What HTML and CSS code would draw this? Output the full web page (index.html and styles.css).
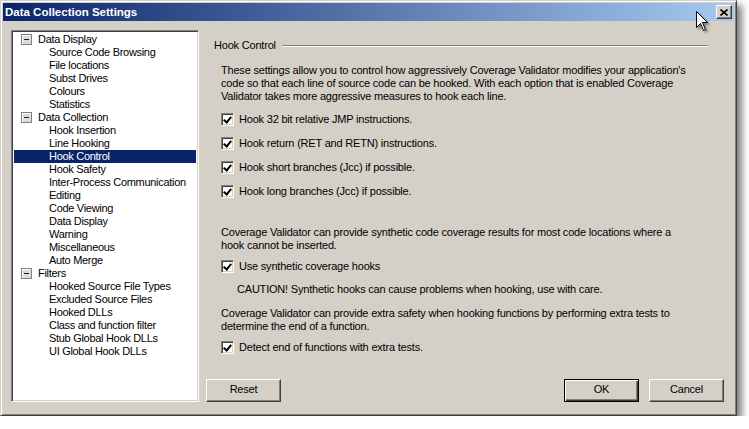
FILE: index.html
```html
<!DOCTYPE html>
<html lang="en">

<head>
    <meta charset="UTF-8">
    <title>Data Collection Settings</title>
    <link rel="stylesheet" href="styles.css">
</head>

<body>

    <div class="window">
        <div class="titlebar">
            <span class="title">Data Collection Settings</span>
            <span class="close-btn">
                <svg width="8" height="7" viewBox="0 0 8 7"><path d="M0.5 0.5 L7.5 6.5 M7.5 0.5 L0.5 6.5" stroke="#000" stroke-width="1.6"/></svg>
            </span>
        </div>

        <div class="dialog-body">
            <ul class="tree">
                <li class="node"><span class="expander"></span>Data Display</li>
                <li class="leaf">Source Code Browsing</li>
                <li class="leaf">File locations</li>
                <li class="leaf">Subst Drives</li>
                <li class="leaf">Colours</li>
                <li class="leaf">Statistics</li>
                <li class="node"><span class="expander"></span>Data Collection</li>
                <li class="leaf">Hook Insertion</li>
                <li class="leaf">Line Hooking</li>
                <li class="leaf selected">Hook Control</li>
                <li class="leaf">Hook Safety</li>
                <li class="leaf">Inter-Process Communication</li>
                <li class="leaf">Editing</li>
                <li class="leaf">Code Viewing</li>
                <li class="leaf">Data Display</li>
                <li class="leaf">Warning</li>
                <li class="leaf">Miscellaneous</li>
                <li class="leaf">Auto Merge</li>
                <li class="node"><span class="expander"></span>Filters</li>
                <li class="leaf">Hooked Source File Types</li>
                <li class="leaf">Excluded Source Files</li>
                <li class="leaf">Hooked DLLs</li>
                <li class="leaf">Class and function filter</li>
                <li class="leaf">Stub Global Hook DLLs</li>
                <li class="leaf">UI Global Hook DLLs</li>
            </ul>

            <div class="panel">
                <div class="group">
                    <div class="group-head">
                        <span>Hook Control</span>
                        <span class="group-line"></span>
                    </div>

                    <p class="note first">These settings allow you to control how aggressively Coverage Validator modifies your application's<br>code so that each line of source code can be hooked. With each option that is enabled Coverage<br>Validator takes more aggressive measures to hook each line.</p>

                    <div class="check first"><span class="box"></span>Hook 32 bit relative JMP instructions.</div>
                    <div class="check"><span class="box"></span>Hook return (RET and RETN) instructions.</div>
                    <div class="check"><span class="box"></span>Hook short branches (Jcc) if possible.</div>
                    <div class="check"><span class="box"></span>Hook long branches (Jcc) if possible.</div>

                    <p class="note second">Coverage Validator can provide synthetic code coverage results for most code locations where a<br>hook cannot be inserted.</p>
                    <div class="check tight"><span class="box"></span>Use synthetic coverage hooks</div>
                    <p class="caution">CAUTION! Synthetic hooks can cause problems when hooking, use with care.</p>

                    <p class="note third">Coverage Validator can provide extra safety when hooking functions by performing extra tests to<br>determine the end of a function.</p>
                    <div class="check tight"><span class="box"></span>Detect end of functions with extra tests.</div>
                </div>

                <div class="buttons">
                    <div class="btn">Reset</div>
                    <div class="spacer"></div>
                    <div class="btn default">OK</div>
                    <div class="btn">Cancel</div>
                </div>
            </div>
        </div>
    </div>

    <!-- mouse pointer sitting over the title bar -->
    <svg class="cursor" width="14" height="22" viewBox="0 0 14 22">
        <path d="M0.5 0.5 L0.5 16.5 L4.5 12.5 L7.5 19.5 L9.5 18.5 L6.5 11.5 L11.5 11.5 Z" fill="#fff" stroke="#000" stroke-width="1"/>
    </svg>

</body>

</html>
```

FILE: styles.css
```css
* {
    margin: 0;
    padding: 0;
    box-sizing: border-box;
}

body {
    background: #fff;
    font-family: "Liberation Sans", Arial, sans-serif;
    font-size: 11px;
    letter-spacing: -0.2px;
    color: #000;
}

.window {
    position: relative;
    width: 737px;
    height: 416px;
    display: flex;
    flex-direction: column;
    background: #d4d0c8;
    border: 1px solid;
    border-color: #d4d0c8 #404040 #404040 #d4d0c8;
    box-shadow: inset 1px 1px #fff, inset -1px -1px #808080, 5px 5px 7px rgba(0, 0, 0, 0.5);
    padding: 2px;
}

.titlebar {
    height: 18px;
    display: flex;
    align-items: center;
    justify-content: space-between;
    padding: 0 2px 0 2px;
    background: linear-gradient(to right, #0a246a, #a6caf0);
}

.title {
    color: #fff;
    font-weight: bold;
    font-size: 11.5px;
    letter-spacing: 0;
    line-height: 18px;
}

.close-btn {
    width: 16px;
    height: 14px;
    display: flex;
    align-items: center;
    justify-content: center;
    background: #d4d0c8;
    border: 1px solid;
    border-color: #fff #404040 #404040 #fff;
    box-shadow: inset -1px -1px #808080;
}

.dialog-body {
    flex: 1;
    display: flex;
    padding: 9px 10px 11px 8px;
    gap: 7px;
}

.tree {
    width: 188px;
    list-style: none;
    background: #fff;
    border: 1px solid;
    border-color: #808080 #fff #fff #808080;
    box-shadow: inset 1px 1px #404040, inset -1px -1px #d4d0c8;
    padding: 2px 2px;
    letter-spacing: -0.3px;
}

.tree li {
    height: 13px;
    line-height: 13px;
    white-space: nowrap;
}

.node {
    display: flex;
    align-items: center;
    padding-left: 7px;
}

.leaf {
    padding-left: 35px;
}

.selected {
    background: #0a246a;
    color: #fff;
}

.expander {
    position: relative;
    width: 11px;
    height: 11px;
    margin-right: 6px;
    border: 1px solid #808080;
    background: #dcdcd8;
    box-shadow: inset 1px 1px #fff;
}

.expander::after {
    content: '';
    position: absolute;
    left: 2px;
    top: 4px;
    width: 5px;
    height: 1px;
    background: #202020;
}

.panel {
    flex: 1;
    display: flex;
    flex-direction: column;
}

.group {
    flex: 1;
    padding: 9px 16px 0 15px;
}

.group-head {
    display: flex;
    align-items: center;
    line-height: 13px;
    margin-left: -7px;
}

.group-line {
    flex: 1;
    height: 2px;
    margin-left: 6px;
    border-top: 1px solid #808080;
    border-bottom: 1px solid #fff;
}

.note {
    line-height: 13px;
    white-space: nowrap;
}

.note.first {
    margin-top: 12px;
}

.note.second {
    margin-top: 28px;
}

.note.third {
    margin-top: 11px;
}

.check {
    display: flex;
    align-items: center;
    height: 13px;
    line-height: 13px;
    margin-top: 11px;
    white-space: nowrap;
}

.check.first {
    margin-top: 10px;
}

.check.tight {
    margin-top: 8px;
}

.box {
    position: relative;
    width: 13px;
    height: 13px;
    margin-right: 5px;
    background: #fff;
    border: 1px solid;
    border-color: #808080 #fff #fff #808080;
    box-shadow: inset 1px 1px #404040, inset -1px -1px #d4d0c8;
}

.box::after {
    content: '';
    position: absolute;
    left: 3px;
    top: 1px;
    width: 3px;
    height: 6px;
    border: solid #000;
    border-width: 0 2px 2px 0;
    transform: rotate(40deg);
}

.caution {
    margin-top: 10px;
    padding-left: 16px;
    line-height: 13px;
    white-space: nowrap;
}

.buttons {
    display: flex;
    height: 23px;
    gap: 10px;
}

.spacer {
    flex: 1;
}

.btn {
    width: 75px;
    height: 23px;
    line-height: 19px;
    text-align: center;
    background: #d4d0c8;
    border: 1px solid;
    border-color: #fff #404040 #404040 #fff;
    box-shadow: inset -1px -1px #808080;
}

.btn.default {
    border-color: #000;
    box-shadow: inset 1px 1px #fff, inset -1px -1px #404040, inset -2px -2px #808080;
}

.cursor {
    position: absolute;
    left: 696px;
    top: 11px;
    filter: drop-shadow(2px 2px 1px rgba(0, 0, 0, 0.4));
}
```
